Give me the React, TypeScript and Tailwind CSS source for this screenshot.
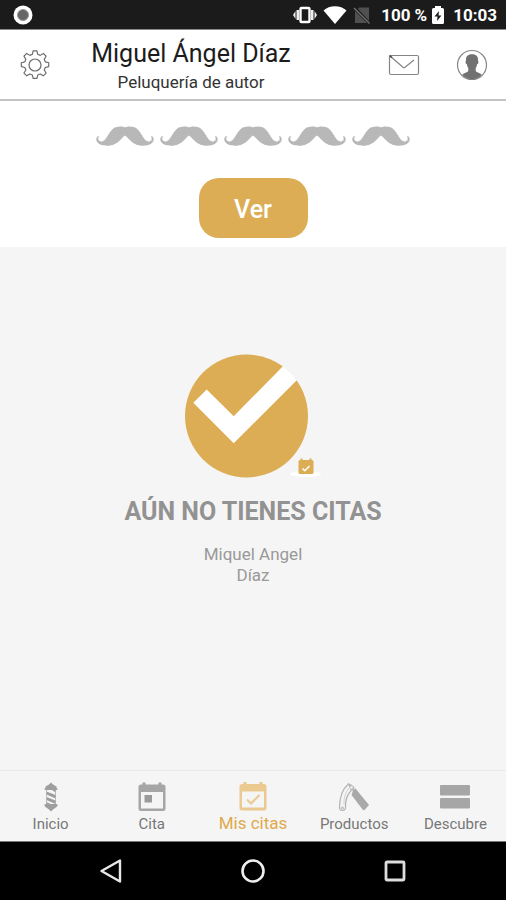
import type { ReactNode } from 'react'

// ─── Types ────────────────────────────────────────────────────────────────────
type Tab = {
  label: string
  icon: ReactNode
  active?: boolean
}

// ─── Icons ────────────────────────────────────────────────────────────────────
function GearIcon() {
  return (
    <svg width="32" height="32" viewBox="0 0 32 32" fill="none" stroke="#6b6b6b" strokeWidth="1.2" strokeLinejoin="round">
      <path d="M14 1.5h4l.8 3.6 2.6 1.1 3.2-2 2.9 2.9-2 3.2 1.1 2.6 3.6.9v4l-3.6.9-1.1 2.6 2 3.2-2.9 2.9-3.2-2-2.6 1.1-.8 3.6h-4l-.8-3.6-2.6-1.1-3.2 2-2.9-2.9 2-3.2-1.1-2.6-3.6-.9v-4l3.6-.9 1.1-2.6-2-3.2 2.9-2.9 3.2 2 2.6-1.1z" transform="translate(0.6 0.4) scale(0.965)" />
      <circle cx="16" cy="16" r="6" />
    </svg>
  )
}

function MailIcon() {
  return (
    <svg width="32" height="22" viewBox="0 0 32 22" fill="none" stroke="#858585" strokeWidth="1.2">
      <rect x="1.5" y="1.5" width="29" height="19" rx="1.5" />
      <path d="M2 2l13 11.300q1 .8 2 0L26 6" />
      <path d="M1.500 1.500l2.500 2" stroke="#444" strokeWidth="1.600" />
    </svg>
  )
}

function AvatarIcon() {
  return (
    <svg width="32" height="32" viewBox="0 0 32 32">
      <circle cx="16" cy="16" r="14.5" fill="#fff" stroke="#888" strokeWidth="1.2" />
      <path
        d="M16 5.200c-4.500 0-6.200 2.500-6 6 0 .7-.6 1-.4 2.300.2 1 .7 1.500 1.200 1.600.3 1.800.8 3 1.500 4v3c-.8 1.500-4.500 2-6 3.600A14.300 14.300 0 0 0 16 30.300a14.300 14.300 0 0 0 9.700-4.600c-1.500-1.600-5.200-2.100-6-3.600v-3c.7-1 1.200-2.200 1.500-4 .5-.1 1-.6 1.200-1.600.2-1.300-.4-1.600-.4-2.300.2-3.500-1.500-6-6-6z"
        fill="#717171"
      />
    </svg>
  )
}

function Moustache() {
  return (
    <svg width="58" height="20" viewBox="0 0 58 20" fill="#b8b8b8">
      <path d="M29 1.500C27 .3 23 0 19.500 1.200 15 2.800 12.500 9 9.500 13c-1.600 2.300-4.300 3.200-6.300 1.800C1.800 13.800 2.300 11.500 3 9.800 1 10.300-.2 12.500.4 14.500 1.500 18 6 19.700 11 19.700c6 0 9.500-2.200 12.500-5 2.200-2 3.700-4.200 5.500-5.200 1.800 1 3.300 3.200 5.500 5.200 3 2.800 6.500 5 12.500 5 5 0 9.500-1.700 10.600-5.200.6-2-.6-4.200-2.600-4.700.7 1.700 1.200 4-.2 5-2 1.400-4.700.5-6.300-1.800C45.500 9 43 2.800 38.500 1.200 35 0 31 .3 29 1.500z" />
    </svg>
  )
}

function PoleIcon() {
  return (
    <svg width="14" height="30" viewBox="0 0 14 30" fill="#9e9e9e">
      <path d="M7 .5L9 2.500l3.500 2v1.500l1 .5v1l-1 .5h-11l-1-.5v-1l1-.5V4.500L5 2.500z" />
      <path d="M2.500 9.500l9 3.500v3.500l-9-4zM2.500 15l9 3.500V22l-9-4zM8 8h3.500v2.500zM2.500 20l4 2h-4z" />
      <path d="M2.500 8v14M11.500 8v14" stroke="#a6a6a6" strokeWidth="0.700" />
      <path d="M1.500 22h11l1 .5v1.500l-1 1L9 27.500 7 29.500l-2-2L1.500 25l-1-1v-1.500z" />
    </svg>
  )
}

function CalendarIcon() {
  return (
    <svg width="28" height="30" viewBox="0 0 28 30">
      <path d="M4.500.5h3v2h13v-2h3v2h1.500a2.500 2.500 0 0 1 2.500 2.500v21.500a2.500 2.500 0 0 1-2.500 2.500H3A2.500 2.500 0 0 1 .5 26.500V5A2.500 2.500 0 0 1 3 2.500h1.500zM3 10v16.500h22V10z" fill="#a6a6a6" fillRule="evenodd" />
      <path d="M6.500 13h7.500v7.500H6.500z" fill="#9a9a9a" />
    </svg>
  )
}

function CalendarCheckIcon() {
  return (
    <svg width="28" height="30" viewBox="0 0 28 30">
      <path d="M4.500 0h3v2h13V0h3v2h1.500a2.500 2.500 0 0 1 2.500 2.500v21.500a2.500 2.500 0 0 1-2.500 2.500H3A2.500 2.500 0 0 1 .5 26V4.500A2.500 2.500 0 0 1 3 2h1.500zM3 9.500V25.500h22V9.500z" fill="#eaca91" fillRule="evenodd" />
      <path d="M8 17.500l4 4 8.500-8.500" fill="none" stroke="#eaca91" strokeWidth="2" />
    </svg>
  )
}

function RazorIcon() {
  return (
    <svg width="32" height="30" viewBox="0 0 32 30" fill="none">
      <path d="M10.500 2C5 6.500 1.500 15 1.500 26c.5 3.300 5 3 6 .5C7 19 9 12.500 14 7.500" stroke="#b3b3b3" strokeWidth="1.200" />
      <path d="M6 22.500C5.500 16 8 9.500 11.500 5.500" stroke="#cfcfcf" strokeWidth="1" />
      <circle cx="4.500" cy="26" r="1" stroke="#b3b3b3" />
      <path d="M9.500 1l3 1 4 3-.5 4-3.500-1z" fill="#b8b8b8" />
      <circle cx="13.500" cy="5.500" r="1.200" fill="#f5f5f5" />
      <path d="M15 8.500l2.500-2L31 23l-4.500 5h-1.500L13.500 13z" fill="#a9a9a9" />
    </svg>
  )
}

function RowsIcon() {
  return (
    <svg width="30" height="30" viewBox="0 0 30 30" fill="#a6a6a6">
      <rect x="0" y="3" width="30" height="10.500" rx="1" />
      <rect x="0" y="16" width="30" height="10.500" rx="1" />
    </svg>
  )
}

function EmptyIllustration() {
  return (
    <svg width="136" height="124" viewBox="0 0 136 124">
      <defs>
        <clipPath id="disc">
          <circle cx="61.500" cy="62" r="61.700" />
        </clipPath>
      </defs>
      <circle cx="61.500" cy="62" r="61.500" fill="#dcad55" />
      <path d="M21.700 35.500L8.300 48.800 48.700 89.200 120 18 106 4 48.700 62.300z" fill="#fff" clipPath="url(#disc)" />
      <ellipse cx="120.500" cy="120" rx="15.500" ry="3" fill="#fff" />
      <path d="M115.500 104.500h2v1.500h7v-1.500h2v1.500h.5a1.500 1.500 0 0 1 1.500 1.500v11a1.500 1.500 0 0 1-1.500 1.500h-12a1.500 1.500 0 0 1-1.500-1.500v-11a1.500 1.500 0 0 1 1.500-1.500h.5z" fill="#dcad55" />
      <path d="M117.500 114.500l2.300 2.200 4.700-4.700" fill="none" stroke="#fff" strokeWidth="1.600" />
    </svg>
  )
}

const tabs: Tab[] = [
  { label: 'Inicio', icon: <PoleIcon /> },
  { label: 'Cita', icon: <CalendarIcon /> },
  { label: 'Mis citas', icon: <CalendarCheckIcon />, active: true },
  { label: 'Productos', icon: <RazorIcon /> },
  { label: 'Descubre', icon: <RowsIcon /> },
]

// ─── Status bar ───────────────────────────────────────────────────────────────
function StatusBar() {
  return (
    <div className="flex h-[30px] items-center justify-between border-b border-[#8a8a8a] bg-[#1b1b1b] pl-3 pr-[9px] text-white">
      <svg width="22" height="22" viewBox="0 0 22 22">
        <circle cx="11" cy="11" r="9.500" fill="#fff" />
        <circle cx="11" cy="11" r="5.500" fill="#666" stroke="#999" strokeWidth="1" />
      </svg>
      <div className="flex items-center">
        <svg width="24" height="20" viewBox="0 0 24 20" className="mr-1.5">
          <path d="M0 10l2.500-4v8zM24 10l-2.500-4v8zM3.500 5h2.500v10H3.500zM18 5h2.500v10H18z" fill="#eee" />
          <rect x="7.500" y="3" width="9" height="14" rx="1" fill="#1b1b1b" stroke="#fff" strokeWidth="2.400" />
        </svg>
        <svg width="24" height="20" viewBox="0 0 24 20" className="mr-1.5">
          <path d="M12 19L.5 5.500C3.500 2.800 7.500 1.300 12 1.300s8.500 1.500 11.500 4.200z" fill="#fff" />
        </svg>
        <svg width="18" height="20" viewBox="0 0 18 20" className="mr-2.5">
          <path d="M6 2.500h10V16L5 4zM2 6l12 12H2z" fill="#505050" />
          <path d="M1 3l15.500 15.500" stroke="#707070" strokeWidth="1.400" />
        </svg>
        <span className="text-[17px] font-bold leading-5">100 %</span>
        <svg width="14" height="20" viewBox="0 0 14 20" className="ml-1 mr-2">
          <path d="M4 1h6v2h1.500A1.500 1.500 0 0 1 13 4.500v13a1.500 1.500 0 0 1-1.500 1.500h-9A1.500 1.500 0 0 1 1 17.500v-13A1.500 1.500 0 0 1 2.500 3H4z" fill="#fff" />
          <path d="M8 6l-4.500 5.500h3L6 16l4.500-5.500h-3z" fill="#1b1b1b" />
        </svg>
        <span className="text-[17px] font-bold leading-5">10:03</span>
      </div>
    </div>
  )
}

// ─── Header ───────────────────────────────────────────────────────────────────
function Header() {
  return (
    <header className="flex h-[71px] items-center border-b-2 border-[#c4c4c4] bg-white">
      <button aria-label="Ajustes" className="flex w-[69px] shrink-0 justify-center">
        <GearIcon />
      </button>
      <div className="flex-1 whitespace-nowrap pr-14 pt-0.5 text-center">
        <h1 className="text-[25px] leading-8 text-[#1c1c1c]">Miguel Ángel Díaz</h1>
        <p className="text-[17px] leading-6 text-[#333]">Peluquería de autor</p>
      </div>
      <button aria-label="Mensajes" className="flex w-[69px] shrink-0 justify-center">
        <MailIcon />
      </button>
      <button aria-label="Perfil" className="flex w-[68px] shrink-0 justify-center">
        <AvatarIcon />
      </button>
    </header>
  )
}

// ─── Bottom tabs ──────────────────────────────────────────────────────────────
function TabBar() {
  return (
    <nav className="grid h-[71px] grid-cols-5 border-t border-[#e9e9e9] bg-[#f5f5f5]">
      {tabs.map((tab) => (
        <a key={tab.label} href="#" className="flex flex-col items-center whitespace-nowrap pt-[11px]">
          {tab.icon}
          {tab.active ? (
            <span className="text-[17px] leading-[22px] text-[#e0a94b]">{tab.label}</span>
          ) : (
            <span className="text-[15px] leading-6 text-[#777]">{tab.label}</span>
          )}
        </a>
      ))}
    </nav>
  )
}

// ─── Page ─────────────────────────────────────────────────────────────────────
export default function App() {
  return (
    <div className="flex min-h-screen flex-col bg-[#f5f5f5] font-[Roboto,sans-serif]">
      <StatusBar />
      <Header />

      {/* Rating */}
      <section className="flex flex-col items-center bg-white pb-[9px] pt-[25px]">
        <div className="flex gap-[6px]">
          {[1, 2, 3, 4, 5].map((n) => (
            <Moustache key={n} />
          ))}
        </div>
        <button className="mt-8 h-[60px] w-[109px] rounded-[20px] bg-[#dcad55] pt-1 text-[25px] font-medium text-white">
          Ver
        </button>
      </section>

      {/* Empty state */}
      <main className="flex flex-1 flex-col items-center pt-[107px] text-center text-[#999]">
        <EmptyIllustration />
        <h2 className="mt-[18px] text-[25px] font-bold leading-8 text-[#929292]">AÚN NO TIENES CITAS</h2>
        <p className="mt-4 w-[120px] text-[17px] leading-[21px]">Miquel Angel Díaz</p>
      </main>

      <TabBar />

      {/* System navigation */}
      <div className="grid h-[59px] grid-cols-3 items-center border-t border-[#777] bg-black px-10">
        <button aria-label="Atrás" className="justify-self-center">
          <svg width="24" height="26" viewBox="0 0 24 26" fill="none" stroke="#e8e8e8" strokeWidth="2.400" strokeLinejoin="round">
            <path d="M21 2.500v21L2.500 13z" />
          </svg>
        </button>
        <button aria-label="Inicio" className="justify-self-center">
          <svg width="26" height="26" viewBox="0 0 26 26" fill="none" stroke="#eee" strokeWidth="2.600">
            <circle cx="13" cy="13" r="10.500" />
          </svg>
        </button>
        <button aria-label="Recientes" className="justify-self-center">
          <svg width="24" height="24" viewBox="0 0 24 24" fill="none" stroke="#ddd" strokeWidth="2.800">
            <rect x="3" y="3" width="18" height="18" rx="1" />
          </svg>
        </button>
      </div>
    </div>
  )
}
